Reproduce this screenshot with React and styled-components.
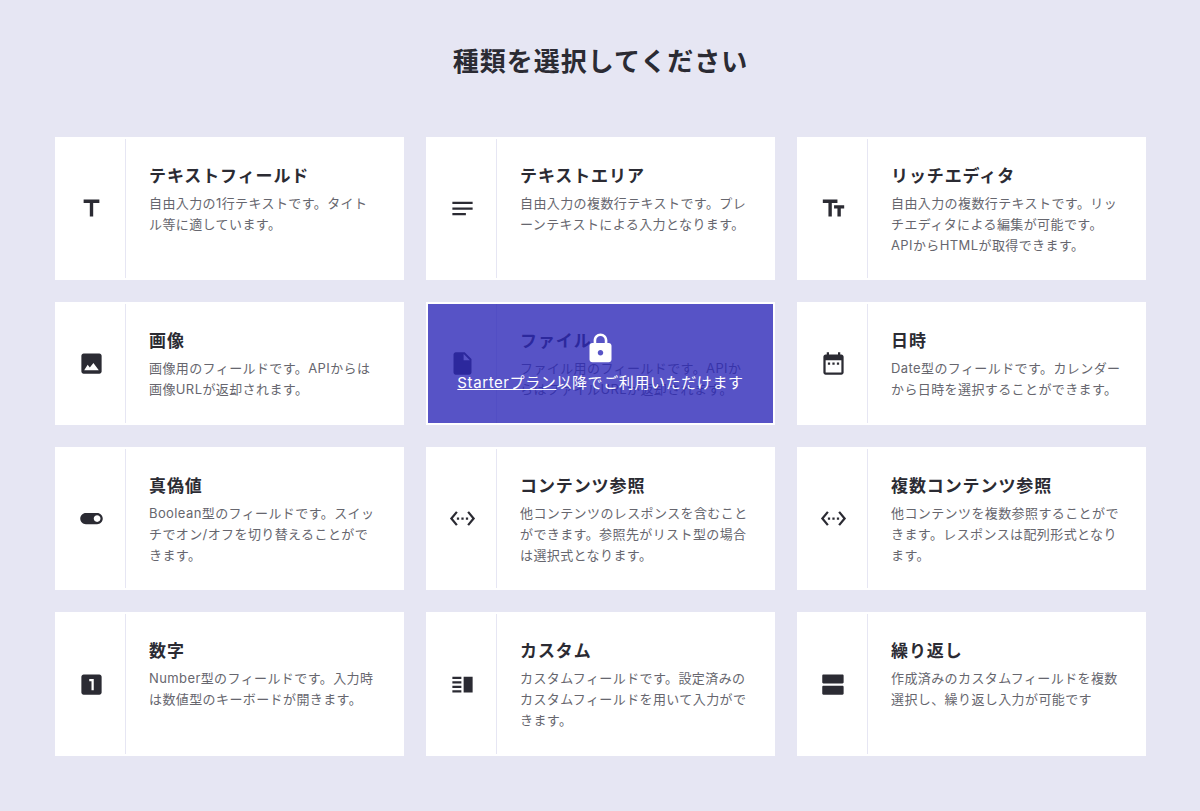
import styled, { createGlobalStyle } from 'styled-components'

const GlobalStyle = createGlobalStyle`
  html, body {
    margin: 0;
    padding: 0;
    background-color: #e6e6f3;
    font-family: Inter, "Noto Sans CJK JP", sans-serif;
  }
`;
const Page = styled.div`
  box-sizing: border-box;
  min-height: 811px;
  padding: 43px 54px 0 55px;
  background-color: #e6e6f3;
`;
const Heading = styled.h1`
  margin: 0 0 57px;
  font-size: 26px;
  line-height: 37px;
  font-weight: 700;
  letter-spacing: 1px;
  text-align: center;
  color: #2b2b33;
`;
const Grid = styled.div`
  display: grid;
  grid-template-columns: repeat(3, 349px);
  column-gap: 22px;
  row-gap: 22px;
`;
const Card = styled.div`
  position: relative;
  display: flex;
  background-color: #fff;
  padding: 2px 0;
`;
const IconCell = styled.div`
  flex: 0 0 71px;
  box-sizing: border-box;
  padding-left: 2px;
  display: flex;
  align-items: center;
  justify-content: center;
  border-right: 1px solid #e6e6f3;
  color: #2b2b33;
  svg {
    width: 27px;
    height: 27px;
    fill: currentColor;
    fill-rule: evenodd;
    display: block;
  }
`;
const Body = styled.div`
  flex: 1;
  min-width: 0;
  padding: 25px 25px 23px 23px;
`;
const Title = styled.h2`
  margin: 0 0 5px;
  font-size: 17px;
  line-height: 24px;
  font-weight: 700;
  letter-spacing: 0.9px;
  color: #2b2b33;
`;
const Desc = styled.p`
  margin: 0;
  font-size: 13px;
  line-height: 20.8px;
  letter-spacing: 0.4px;
  color: #66666e;
`;
const Locked = styled.div`
  position: absolute;
  inset: 0;
  box-sizing: border-box;
  border: 2px solid #fff;
  background-color: rgba(45, 40, 184, 0.8);
  display: flex;
  flex-direction: column;
  align-items: center;
  justify-content: center;
  color: #fff;
  font-size: 15px;
  line-height: 24px;
  letter-spacing: 0.6px;
  svg {
    width: 33px;
    height: 33px;
    fill: currentColor;
    fill-rule: evenodd;
    display: block;
    margin-bottom: 6px;
  }
  a {
    color: #fff;
    text-decoration: underline;
  }
`;

const icons = {
  text: 'M5 4v3h5.5v12h3V7H19V4z',
  notes: 'M3 18h12v-2H3v2zM3 6v2h18V6H3zm0 7h18v-2H3v2z',
  rich: 'M2.5 4v3h5v12h3V7h5V4h-13zm19 5h-9v3h3v7h3v-7h3V9z',
  image: 'M5 3h14c1.1 0 2 .9 2 2v14c0 1.1-.9 2-2 2H5c-1.1 0-2-.9-2-2V5c0-1.1.9-2 2-2zm.5 15h13l-4.8-6.5-3.2 4-1.9-2.5z',
  file: 'M6 2c-1.1 0-1.99.9-1.99 2L4 20c0 1.1.89 2 1.99 2H18c1.1 0 2-.9 2-2V8l-6-6H6zm7 7V3.5L18.5 9H13z',
  date: 'M9 11H7v2h2v-2zm4 0h-2v2h2v-2zm4 0h-2v2h2v-2zm2-7h-1V2h-2v2H8V2H6v2H5c-1.11 0-1.99.9-1.99 2L3 20c0 1.1.89 2 2 2h14c1.1 0 2-.9 2-2V6c0-1.1-.9-2-2-2zm0 16H5V9h14v11z',
  toggle: 'M17 7H7c-2.76 0-5 2.24-5 5s2.24 5 5 5h10c2.76 0 5-2.24 5-5s-2.24-5-5-5zm0 8c-1.66 0-3-1.34-3-3s1.34-3 3-3 3 1.34 3 3-1.34 3-3 3z',
  relation: 'M7.77 6.76L6.23 5.48.82 12l5.41 6.52 1.54-1.28L3.42 12l4.35-5.24zM7 13h2v-2H7v2zm10-2h-2v2h2v-2zm-6 2h2v-2h-2v2zm6.77-7.52l-1.54 1.28L20.58 12l-4.35 5.24 1.54 1.28L23.18 12l-5.41-6.52z',
  number: 'M19 3H5c-1.1 0-2 .9-2 2v14c0 1.1.9 2 2 2h14c1.1 0 2-.9 2-2V5c0-1.1-.9-2-2-2zm-5 14h-2V9h-2V7h4v10z',
  custom: 'M3 15h8v-2H3v2zm0 4h8v-2H3v2zm0-8h8V9H3v2zm0-6v2h8V5H3zm10 0v14h8V5h-8z',
  repeat: 'M20 13H3c-.55 0-1 .45-1 1v6c0 .55.45 1 1 1h17c.55 0 1-.45 1-1v-6c0-.55-.45-1-1-1zm0-10H3c-.55 0-1 .45-1 1v6c0 .55.45 1 1 1h17c.55 0 1-.45 1-1V4c0-.55-.45-1-1-1z',
  lock: 'M18 8h-1V6c0-2.76-2.24-5-5-5S7 3.24 7 6v2H6c-1.1 0-2 .9-2 2v10c0 1.1.9 2 2 2h12c1.1 0 2-.9 2-2V10c0-1.1-.9-2-2-2zm-6 9c-1.1 0-2-.9-2-2s.9-2 2-2 2 .9 2 2-.9 2-2 2zm3.1-9H8.9V6c0-1.71 1.39-3.1 3.1-3.1 1.71 0 3.1 1.39 3.1 3.1v2z',
};

const Icon = ({name}) => (
  <svg viewBox="0 0 24 24" aria-hidden="true"><path d={icons[name]} /></svg>
);

const fields = [
  {icon: 'text', title: 'テキストフィールド', desc: '自由入力の1行テキストです。タイトル等に適しています。'},
  {icon: 'notes', title: 'テキストエリア', desc: '自由入力の複数行テキストです。プレーンテキストによる入力となります。'},
  {icon: 'rich', title: 'リッチエディタ', desc: '自由入力の複数行テキストです。リッチエディタによる編集が可能です。APIからHTMLが取得できます。'},
  {icon: 'image', title: '画像', desc: '画像用のフィールドです。APIからは画像URLが返却されます。'},
  {icon: 'file', title: 'ファイル', desc: 'ファイル用のフィールドです。APIからはファイルURLが返却されます。', locked: true},
  {icon: 'date', title: '日時', desc: 'Date型のフィールドです。カレンダーから日時を選択することができます。'},
  {icon: 'toggle', title: '真偽値', desc: 'Boolean型のフィールドです。スイッチでオン/オフを切り替えることができます。'},
  {icon: 'relation', title: 'コンテンツ参照', desc: '他コンテンツのレスポンスを含むことができます。参照先がリスト型の場合は選択式となります。'},
  {icon: 'relation', title: '複数コンテンツ参照', desc: '他コンテンツを複数参照することができます。レスポンスは配列形式となります。'},
  {icon: 'number', title: '数字', desc: 'Number型のフィールドです。入力時は数値型のキーボードが開きます。'},
  {icon: 'custom', title: 'カスタム', desc: 'カスタムフィールドです。設定済みのカスタムフィールドを用いて入力ができます。'},
  {icon: 'repeat', title: '繰り返し', desc: '作成済みのカスタムフィールドを複数選択し、繰り返し入力が可能です'},
];

const FieldCard = ({icon, title, desc, locked}) => (
  <Card>
    <IconCell><Icon name={icon} /></IconCell>
    <Body>
      <Title>{title}</Title>
      <Desc>{desc}</Desc>
    </Body>
    {locked && (
      <Locked>
        <Icon name="lock" />
        <span><a href="#starter">Starterプラン</a>以降でご利用いただけます</span>
      </Locked>
    )}
  </Card>
);

export default function App() {
  return (
    <Page>
      <GlobalStyle />
      <Heading>種類を選択してください</Heading>
      <Grid>
        {fields.map((item) => (
          <FieldCard key={item.title} {...item} />
        ))}
      </Grid>
    </Page>
  );
}
